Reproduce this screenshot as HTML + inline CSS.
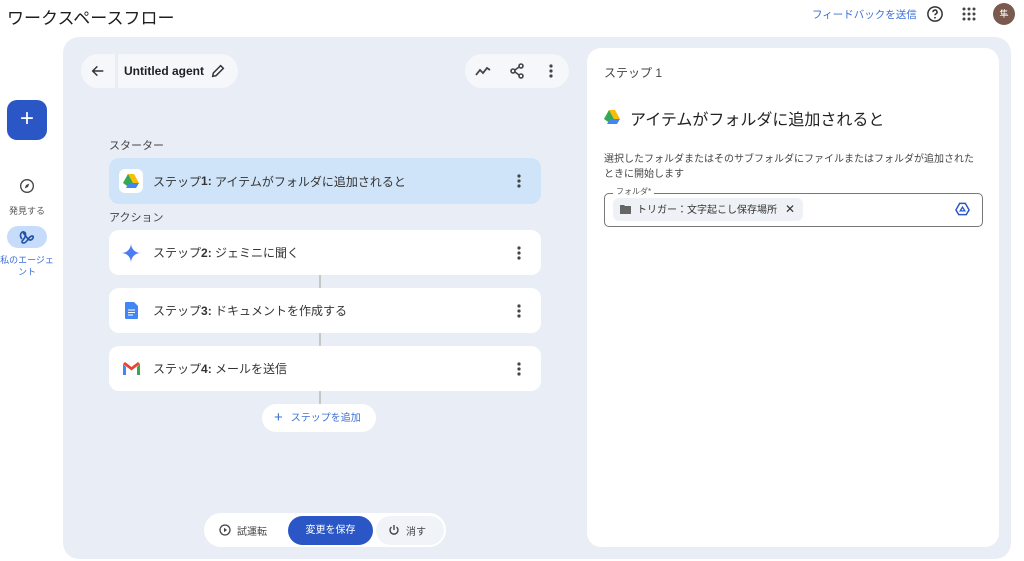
<!DOCTYPE html>
<html><head><meta charset="utf-8"><style>
*{box-sizing:border-box;margin:0;padding:0}
body{width:1024px;height:561px;background:#fff;font-family:"Liberation Sans","Noto Sans CJK JP",sans-serif;color:#1f1f1f;position:relative;overflow:hidden}
.abs{position:absolute}
.main{left:63px;top:37px;width:948px;height:522px;background:#e9eef6;border-radius:16px}
.card{background:#fff;border-radius:12px}
.step{left:109px;width:432px;height:45px;border-radius:10px;background:#fff;display:flex;align-items:center;font-size:12px;color:#333}
.step b{font-weight:bold}
.step .ic{width:24px;height:24px;margin-left:10px;margin-right:10px;display:flex;align-items:center;justify-content:center}
.step .dots{position:absolute;right:20px;top:16px}
.line{left:319px;width:2px;background:#c4c7c5}
</style></head><body>
<div class="abs" style="left:7px;top:4px;font-size:17px;color:#1f1f1f">ワークスペースフロー</div>
<div class="abs" style="left:812px;top:7px;font-size:10.5px;color:#3b6fd6">フィードバックを送信</div>
<svg class="abs" style="left:926px;top:5px" width="18" height="18" viewBox="0 0 24 24"><circle cx="12" cy="12" r="9.5" fill="none" stroke="#333" stroke-width="2"/><path d="M9.3 9.5a2.7 2.7 0 1 1 3.8 2.4c-.8.4-1.1.9-1.1 1.8" fill="none" stroke="#333" stroke-width="2"/><circle cx="12" cy="17" r="1.2" fill="#333"/></svg>
<svg class="abs" style="left:962px;top:7px" width="14" height="14" viewBox="0 0 14 14" fill="#444"><circle cx="2" cy="2" r="1.5"/><circle cx="7" cy="2" r="1.5"/><circle cx="12" cy="2" r="1.5"/><circle cx="2" cy="7" r="1.5"/><circle cx="7" cy="7" r="1.5"/><circle cx="12" cy="7" r="1.5"/><circle cx="2" cy="12" r="1.5"/><circle cx="7" cy="12" r="1.5"/><circle cx="12" cy="12" r="1.5"/></svg>
<div class="abs" style="left:993px;top:3px;width:22px;height:22px;border-radius:50%;background:#7a5a4e;color:#fff;font-size:9px;text-align:center;line-height:22px">隼</div>

<div class="abs" style="left:7px;top:100px;width:40px;height:40px;border-radius:10px;background:#2a56c6;color:#fff;font-size:24px;text-align:center;line-height:38px;font-weight:300">+</div>
<svg class="abs" style="left:19px;top:178px" width="16" height="16" viewBox="0 0 24 24"><circle cx="12" cy="12" r="9.5" fill="none" stroke="#444" stroke-width="2"/><path d="M15.5 8.5l-2 5-5 2 2-5z" fill="#444"/></svg>
<div class="abs" style="left:0;top:204px;width:54px;text-align:center;font-size:9px;color:#555">発見する</div>
<div class="abs" style="left:7px;top:226px;width:40px;height:22px;border-radius:11px;background:#c6dcfa"></div>
<svg class="abs" style="left:19px;top:230px" width="16" height="14" viewBox="0 0 16 14"><path d="M3 9C0 6 2 1 5 2s1 6-1 8-1 3 1 3 4-4 6-6 4-1 3 1-3 3-5 1-3-5-5-6" fill="none" stroke="#1f4fa8" stroke-width="1.6"/></svg>
<div class="abs" style="left:0;top:254px;width:54px;text-align:center;font-size:9px;color:#3b6fd6;line-height:12px">私のエージェ<br>ント</div>

<div class="abs main"></div>
<div class="abs" style="left:81px;top:54px;width:34px;height:34px;border-radius:17px 0 0 17px;background:#f5f7fb"></div>
<svg class="abs" style="left:90px;top:63px" width="16" height="16" viewBox="0 0 24 24"><path d="M20 12H5M11 5l-7 7 7 7" fill="none" stroke="#333" stroke-width="2.2"/></svg>
<div class="abs" style="left:118px;top:54px;width:120px;height:34px;border-radius:0 17px 17px 0;background:#f5f7fb;font-size:12px;font-weight:bold;line-height:34px;padding-left:6px">Untitled agent</div>
<svg class="abs" style="left:210px;top:63px" width="16" height="16" viewBox="0 0 24 24"><path d="M4 20l1-5L16 4l4 4L9 19z" fill="none" stroke="#333" stroke-width="2.2"/></svg>
<div class="abs" style="left:465px;top:54px;width:104px;height:34px;border-radius:17px;background:#f5f7fb"></div>
<svg class="abs" style="left:475px;top:64px" width="16" height="14" viewBox="0 0 16 14"><path d="M1 11l4-5 3 3 4-5 3 2" fill="none" stroke="#444" stroke-width="1.8"/></svg>
<svg class="abs" style="left:510px;top:63px" width="14" height="16" viewBox="0 0 14 16"><circle cx="11" cy="3" r="2" fill="none" stroke="#444" stroke-width="1.6"/><circle cx="3" cy="8" r="2" fill="none" stroke="#444" stroke-width="1.6"/><circle cx="11" cy="13" r="2" fill="none" stroke="#444" stroke-width="1.6"/><path d="M5 7l4-3M5 9l4 3" stroke="#444" stroke-width="1.6"/></svg>
<svg class="abs" style="left:549px;top:64px" width="4" height="14" viewBox="0 0 4 14" fill="#444"><circle cx="2" cy="2" r="1.6"/><circle cx="2" cy="7" r="1.6"/><circle cx="2" cy="12" r="1.6"/></svg>

<div class="abs" style="left:109px;top:137px;font-size:11px;color:#444">スターター</div>
<div class="abs line" style="top:275px;height:13px"></div>
<div class="abs line" style="top:333px;height:13px"></div>
<div class="abs line" style="top:391px;height:13px"></div>
<div class="abs step" style="top:158px;background:#cfe4f8;height:46px">
 <div class="ic" style="background:#fff;border-radius:6px;width:24px;height:24px"><svg width="16" height="14" viewBox="0 0 16 14"><path d="M5 0h6l5 9h-6z" fill="#fbbc04"/><path d="M5 0l5 9-3 5L0 9z" fill="#34a853"/><path d="M3 14l3-5h10l-3 5z" fill="#4285f4"/></svg></div>
 ステップ<b>1:</b>&nbsp;アイテムがフォルダに追加されると
 <svg class="dots" width="4" height="14" viewBox="0 0 4 14" fill="#444"><circle cx="2" cy="2" r="1.6"/><circle cx="2" cy="7" r="1.6"/><circle cx="2" cy="12" r="1.6"/></svg></div>
<div class="abs" style="left:109px;top:209px;font-size:11px;color:#444">アクション</div>
<div class="abs step" style="top:230px"><div class="ic"><svg width="20" height="20" viewBox="0 0 20 20"><path d="M10 0C10 6 14 10 20 10 14 10 10 14 10 20 10 14 6 10 0 10 6 10 10 6 10 0z" fill="#4a7df0"/></svg></div>ステップ<b>2:</b>&nbsp;ジェミニに聞く<svg class="dots" width="4" height="14" viewBox="0 0 4 14" fill="#444"><circle cx="2" cy="2" r="1.6"/><circle cx="2" cy="7" r="1.6"/><circle cx="2" cy="12" r="1.6"/></svg></div>
<div class="abs step" style="top:288px"><div class="ic"><svg width="13" height="17" viewBox="0 0 13 17"><path d="M0 1a1 1 0 0 1 1-1h8l4 4v12a1 1 0 0 1-1 1H1a1 1 0 0 1-1-1z" fill="#4285f4"/><path d="M3 8h7M3 10.5h7M3 13h5" stroke="#fff" stroke-width="1"/></svg></div>ステップ<b>3:</b>&nbsp;ドキュメントを作成する<svg class="dots" width="4" height="14" viewBox="0 0 4 14" fill="#444"><circle cx="2" cy="2" r="1.6"/><circle cx="2" cy="7" r="1.6"/><circle cx="2" cy="12" r="1.6"/></svg></div>
<div class="abs step" style="top:346px"><div class="ic"><svg width="17" height="13" viewBox="0 0 17 13"><path d="M0 2v11h3V5z" fill="#4285f4"/><path d="M17 2v11h-3V5z" fill="#34a853"/><path d="M0 2l8.5 6.5L17 2 15 0 8.5 5 2 0z" fill="#ea4335"/></svg></div>ステップ<b>4:</b>&nbsp;メールを送信<svg class="dots" width="4" height="14" viewBox="0 0 4 14" fill="#444"><circle cx="2" cy="2" r="1.6"/><circle cx="2" cy="7" r="1.6"/><circle cx="2" cy="12" r="1.6"/></svg></div>
<div class="abs" style="left:262px;top:404px;width:114px;height:28px;border-radius:14px;background:#fff;font-size:10px;color:#3b6fd6;line-height:28px;padding-left:12px"><span style="font-size:15px;vertical-align:-1px;margin-right:8px">+</span>ステップを追加</div>

<div class="abs" style="left:204px;top:513px;width:242px;height:34px;border-radius:17px;background:#fff"></div>
<svg class="abs" style="left:219px;top:524px" width="12" height="12" viewBox="0 0 12 12"><circle cx="6" cy="6" r="5" fill="none" stroke="#444" stroke-width="1.3"/><path d="M5 3.8v4.4L8 6z" fill="#444"/></svg>
<div class="abs" style="left:237px;top:523px;font-size:10px;color:#444">試運転</div>
<div class="abs" style="left:288px;top:516px;width:85px;height:29px;border-radius:15px;background:#2a56c6;color:#fff;font-size:10px;text-align:center;line-height:29px">変更を保存</div>
<div class="abs" style="left:376px;top:516px;width:68px;height:29px;border-radius:15px;background:#f0f3f8"></div>
<svg class="abs" style="left:388px;top:524px" width="12" height="12" viewBox="0 0 12 12"><path d="M6 1v5M3.5 3a4 4 0 1 0 5 0" fill="none" stroke="#444" stroke-width="1.4"/></svg>
<div class="abs" style="left:406px;top:523px;font-size:10px;color:#444">消す</div>

<div class="abs card" style="left:587px;top:48px;width:412px;height:499px;border-radius:14px"></div>
<div class="abs" style="left:604px;top:64px;font-size:12px;color:#444">ステップ 1</div>
<svg class="abs" style="left:604px;top:110px" width="16" height="14" viewBox="0 0 16 14"><path d="M5 0h6l5 9h-6z" fill="#fbbc04"/><path d="M5 0l5 9-3 5L0 9z" fill="#34a853"/><path d="M3 14l3-5h10l-3 5z" fill="#4285f4"/></svg>
<div class="abs" style="left:630px;top:106px;font-size:16px;color:#222">アイテムがフォルダに追加されると</div>
<div class="abs" style="left:604px;top:152px;font-size:10px;color:#444;line-height:15px;width:380px">選択したフォルダまたはそのサブフォルダにファイルまたはフォルダが追加された<br>ときに開始します</div>
<div class="abs" style="left:604px;top:193px;width:379px;height:34px;border:1px solid #777;border-radius:5px"></div>
<div class="abs" style="left:613px;top:186px;background:#fff;font-size:8px;color:#555;padding:0 3px">フォルダ*</div>
<div class="abs" style="left:613px;top:198px;width:190px;height:23px;border-radius:6px;background:#eef1f6;font-size:10px;color:#333;line-height:23px;padding-left:24px">トリガー：文字起こし保存場所<span style="margin-left:8px;font-size:12px">✕</span></div>
<svg class="abs" style="left:620px;top:205px" width="11" height="9" viewBox="0 0 11 9"><path d="M0 0h4l1 1h6v8H0z" fill="#666"/></svg>
<svg class="abs" style="left:955px;top:202px" width="15" height="14" viewBox="0 0 16 14"><path d="M5 1h6l4 7-3 5H4L1 8z" fill="none" stroke="#2a56c6" stroke-width="1.6"/><path d="M8 5l2.5 4h-5z" fill="none" stroke="#2a56c6" stroke-width="1.4"/></svg>
</body></html>
